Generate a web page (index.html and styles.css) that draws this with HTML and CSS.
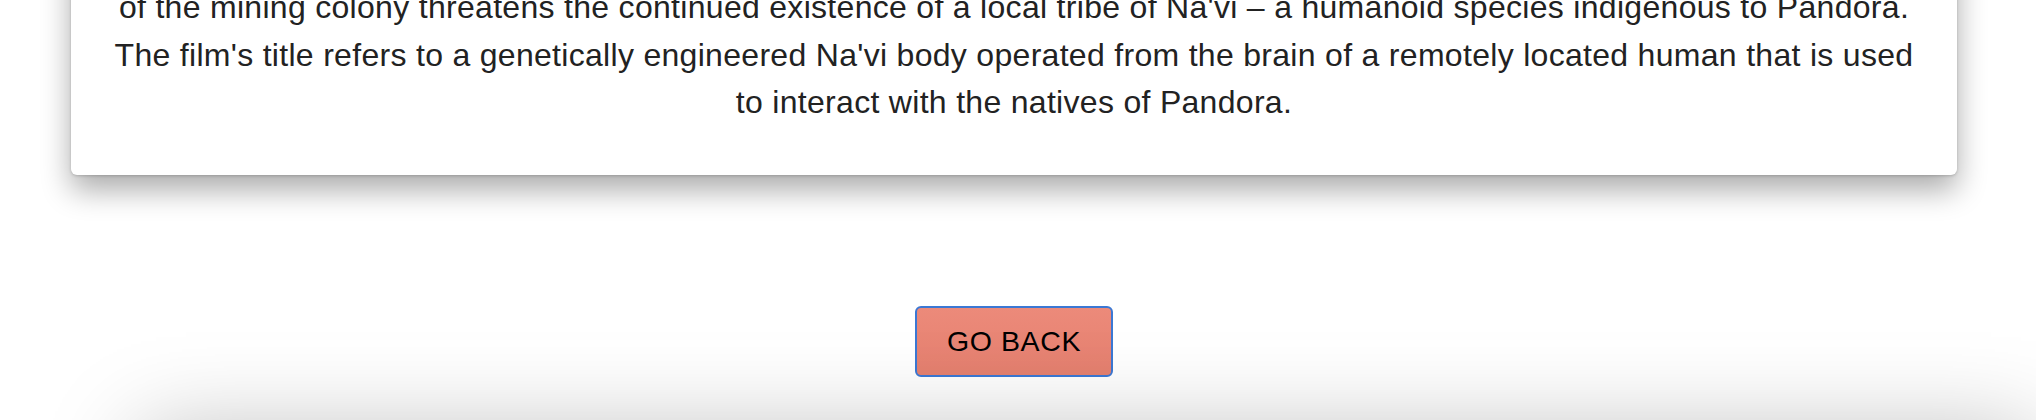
FILE: index.html
```html
<!DOCTYPE html>
<html lang="en">
<head>
<meta charset="utf-8">
<title>Avatar</title>
<link rel="stylesheet" href="styles.css">
</head>
<body>
<main class="page">
  <section class="card">
    <p class="synopsis">of the mining colony threatens the continued existence of a local tribe of Na'vi – a humanoid species indigenous to Pandora.<br>The film's title refers to a genetically engineered Na'vi body operated from the brain of a remotely located human that is used<br>to interact with the natives of Pandora.</p>
  </section>
  <div class="actions">
    <button class="back-btn" type="button">GO BACK</button>
  </div>
  <div class="next-panel"></div>
</main>
</body>
</html>
```

FILE: styles.css
```css
html {
  overflow: hidden;
}

body {
  margin: 0;
  background: #ffffff;
  font-family: "Liberation Sans", Arial, Helvetica, sans-serif;
  color: #222222;
}

.page {
  display: flex;
  flex-direction: column;
  padding: 0 79px 0 71px;
}

.card {
  margin-top: -58px;
  padding: 42px 30px 48px;
  background: #ffffff;
  border-radius: 6px;
  box-shadow: 0 15px 30px rgba(0, 0, 0, 0.33), 0 1px 3px rgba(0, 0, 0, 0.18);
}

.synopsis {
  margin: 0;
  font-size: 32px;
  line-height: 47.6px;
  letter-spacing: 0.3px;
  text-align: center;
  color: #222222;
}

.actions {
  display: flex;
  justify-content: center;
  margin-top: 131px;
}

.back-btn {
  width: 198px;
  height: 71px;
  padding: 0;
  border: 2px solid #3b78d4;
  border-radius: 6px;
  background: linear-gradient(#ec8a7a, #e5806f);
  color: #000000;
  font-family: "Liberation Sans", Arial, Helvetica, sans-serif;
  font-size: 28.5px;
  letter-spacing: 0.6px;
  cursor: pointer;
}

.next-panel {
  margin: 58px -79px 0 70px;
  height: 300px;
  background: #ffffff;
  box-shadow: 0 0 90px rgba(0, 0, 0, 0.28);
}
```
